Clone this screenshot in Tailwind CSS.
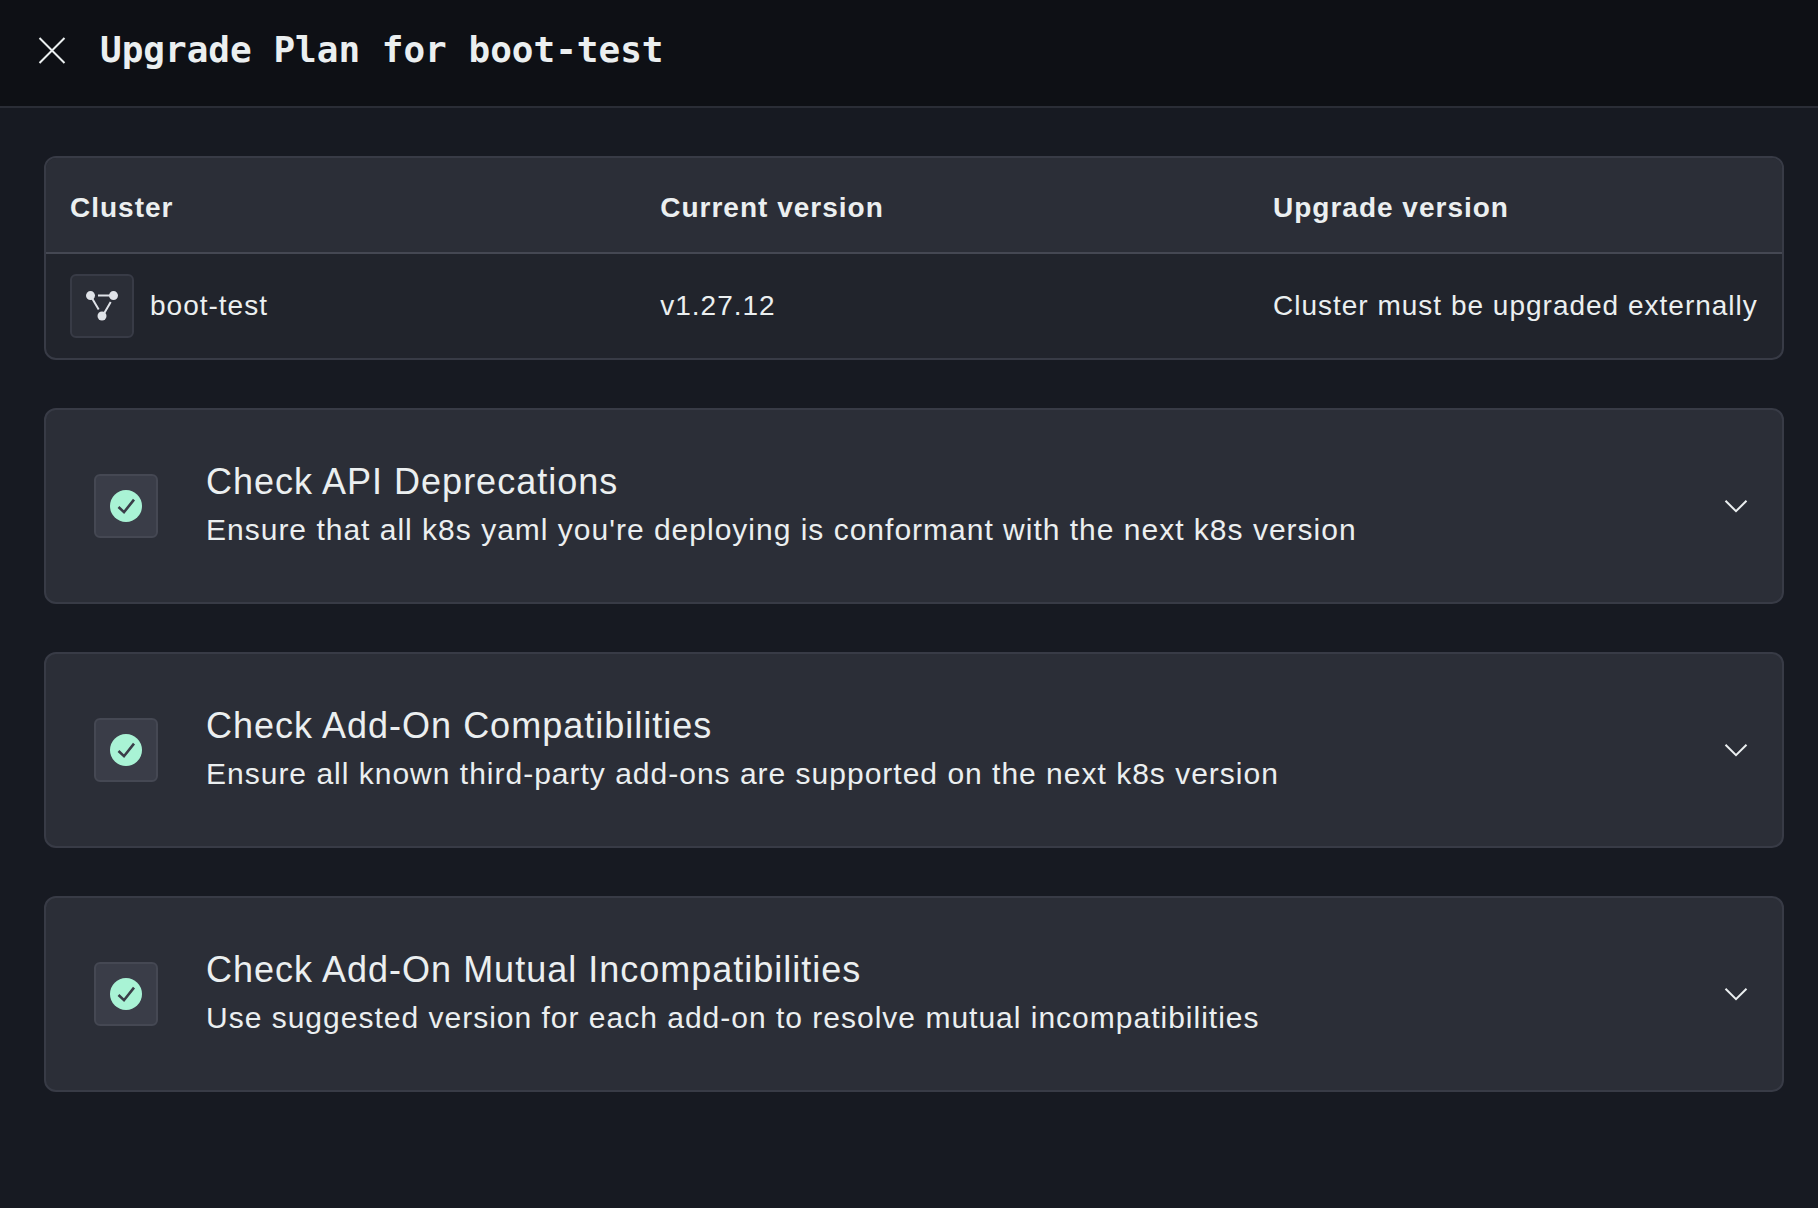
<!DOCTYPE html>
<html lang="en">
<head>
<meta charset="utf-8">
<meta name="viewport" content="width=device-width, initial-scale=1">
<title>Upgrade Plan for boot-test</title>
<script src="https://cdn.jsdelivr.net/npm/@tailwindcss/browser@4"></script>
</head>
<body class="min-h-screen bg-[#171a22] font-['Liberation_Sans',Arial,sans-serif] tracking-[1px] text-[#ebeff0]">
<svg class="hidden" aria-hidden="true">
  <symbol id="check" viewBox="0 0 32 32">
    <circle cx="16" cy="16" r="16" fill="#a9f3d5"/>
    <path d="M8.5 17 L14 22.2 L24 9.6" fill="none" stroke="#3a3d48" stroke-width="2.6"/>
  </symbol>
  <symbol id="chevron" viewBox="0 0 28 28">
    <path d="M3.5 8.8 L14 19.2 L24.5 8.8" fill="none" stroke="#ebeff0" stroke-width="2"/>
  </symbol>
</svg>

<header class="flex items-center gap-8 border-b-2 border-[#2a2d36] bg-[#0e1015] px-9 pt-7 pb-[34px]">
  <button type="button" aria-label="Close" class="shrink-0">
    <svg class="size-8" viewBox="0 0 32 32" fill="none" stroke="#ebeff0" stroke-width="2"><path d="M3.5 4 L28.5 29 M28.5 4 L3.5 29"/></svg>
  </button>
  <h1 class="font-['DejaVu_Sans_Mono',monospace] text-4xl/11 font-bold tracking-normal">Upgrade Plan for boot-test</h1>
</header>

<main class="flex flex-col gap-12 py-12 pr-[34px] pl-11">
  <div class="overflow-hidden rounded-xl border-2 border-[#383b46] bg-[#21242c]">
    <table class="w-full table-fixed border-collapse text-left text-[28px]/10">
      <colgroup><col class="w-[34%]"><col><col class="w-[533px]"></colgroup>
      <thead class="bg-[#2b2e37]">
        <tr class="border-b-2 border-[#454853]">
          <th scope="col" class="px-6 pt-[30px] pb-6 font-bold">Cluster</th>
          <th scope="col" class="px-6 pt-[30px] pb-6 font-bold">Current version</th>
          <th scope="col" class="px-6 pt-[30px] pb-6 font-bold">Upgrade version</th>
        </tr>
      </thead>
      <tbody>
        <tr>
          <td class="px-6 py-5">
            <div class="flex items-center gap-4">
              <span class="flex size-16 items-center justify-center rounded-md border-2 border-[#383b46] bg-[#2b2e37]">
                <svg class="size-8" viewBox="0 0 32 32" fill="#dfe2e7" stroke="#dfe2e7" stroke-width="2" aria-hidden="true">
                  <path d="M12 5.5 H27 M5 6.5 L12.7 19.6 M24.7 12 L16 27" fill="none"/>
                  <g stroke="none"><circle cx="4.5" cy="5.6" r="4.5"/><circle cx="27.5" cy="5.6" r="4.5"/><circle cx="16" cy="26" r="4.5"/></g>
                </svg>
              </span>
              boot-test
            </div>
          </td>
          <td class="px-6 py-5">v1.27.12</td>
          <td class="px-6 py-5 whitespace-nowrap">Cluster must be upgraded externally</td>
        </tr>
      </tbody>
    </table>
  </div>

  <button type="button" aria-expanded="false" class="flex w-full items-center gap-12 rounded-xl border-2 border-[#383b46] bg-[#2b2e37] py-12 pr-8 pl-12 text-left">
    <span class="flex size-16 shrink-0 items-center justify-center rounded-md border-2 border-[#454853] bg-[#3a3d48]"><svg class="size-8"><use href="#check"/></svg></span>
    <span class="grow">
      <span class="block text-4xl/12">Check API Deprecations</span>
      <span class="block text-3xl/12">Ensure that all k8s yaml you're deploying is conformant with the next k8s version</span>
    </span>
    <svg class="size-7 shrink-0"><use href="#chevron"/></svg>
  </button>

  <button type="button" aria-expanded="false" class="flex w-full items-center gap-12 rounded-xl border-2 border-[#383b46] bg-[#2b2e37] py-12 pr-8 pl-12 text-left">
    <span class="flex size-16 shrink-0 items-center justify-center rounded-md border-2 border-[#454853] bg-[#3a3d48]"><svg class="size-8"><use href="#check"/></svg></span>
    <span class="grow">
      <span class="block text-4xl/12">Check Add-On Compatibilities</span>
      <span class="block text-3xl/12">Ensure all known third-party add-ons are supported on the next k8s version</span>
    </span>
    <svg class="size-7 shrink-0"><use href="#chevron"/></svg>
  </button>

  <button type="button" aria-expanded="false" class="flex w-full items-center gap-12 rounded-xl border-2 border-[#383b46] bg-[#2b2e37] py-12 pr-8 pl-12 text-left">
    <span class="flex size-16 shrink-0 items-center justify-center rounded-md border-2 border-[#454853] bg-[#3a3d48]"><svg class="size-8"><use href="#check"/></svg></span>
    <span class="grow">
      <span class="block text-4xl/12">Check Add-On Mutual Incompatibilities</span>
      <span class="block text-3xl/12">Use suggested version for each add-on to resolve mutual incompatibilities</span>
    </span>
    <svg class="size-7 shrink-0"><use href="#chevron"/></svg>
  </button>
</main>
</body>
</html>
